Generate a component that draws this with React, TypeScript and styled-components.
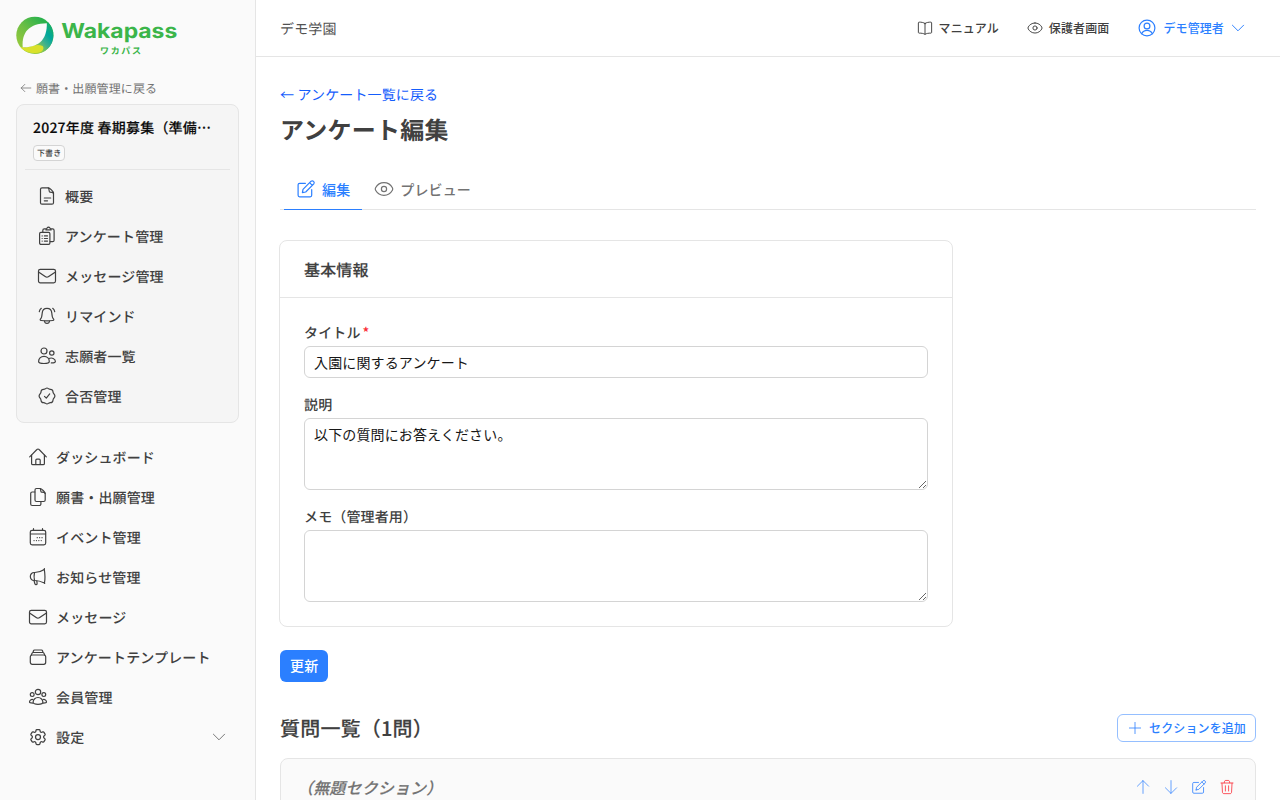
import React from "react";
import styled, { createGlobalStyle, css } from "styled-components";
import { HiOutlineCog6Tooth } from "react-icons/hi2";

const GlobalStyle = createGlobalStyle`
  *, *::before, *::after { box-sizing: border-box; }
  body {
    margin: 0;
    height: 800px;
    overflow: hidden;
    background: #fff;
    color: #404040;
    font-family: "Noto Sans CJK JP", "Noto Sans", sans-serif;
    font-size: 14px;
    line-height: 20px;
    text-rendering: geometricPrecision;
  }
  h1, h2, h3, p { margin: 0; }
  a, p, h1, h2, h3, span, label, button, input, textarea { letter-spacing: 0.01em; }
  button, input, textarea { font: inherit; color: inherit; margin: 0; }
`;

/* sits between the medium and bold cuts of the face */
const semiboldText = css`
  font-weight: 500;
  -webkit-text-stroke: 0.15px currentColor;
`;

/* ---------- icons, all on a 20 unit grid ---------- */

const Svg = styled.svg<{ $size: number; $weight: number }>`
  flex: none;
  display: block;
  width: ${(p) => p.$size}px;
  height: ${(p) => p.$size}px;
  fill: none;
  stroke: currentColor;
  stroke-width: ${(p) => p.$weight};
  stroke-linecap: round;
  stroke-linejoin: round;
`;

const glyphs = {
  file: (
    <>
      <path d="M11.3 1.8H5a1.5 1.5 0 0 0-1.5 1.5v13.4A1.5 1.5 0 0 0 5 18.200h10a1.500 1.500 0 0 0 1.500-1.500V7c0-1.400-3.800-5.200-5.200-5.200Z" />
      <path d="M11.300 1.900c1.300.8.300 4.200 1.500 4.200s3.600.1 3.600 1.400M7.300 12h6.400M7.300 14.800h3.200" />
    </>
  ),
  clipboard: (
    <>
      <rect x="2.600" y="6.400" width="10.300" height="12" rx="1.300" />
      <path d="M5.800 6.200V4.400a1.500 1.500 0 0 1 1.500-1.500h1.400M14.300 2.900h1.300A1.500 1.500 0 0 1 17.100 4.400v9.800a1.500 1.500 0 0 1-1.500 1.500h-2.400" />
      <path d="M9 3.900c0-1.400.9-1.400 1.200-2 .6-1 2-1 2.600 0 .3.600 1.300.6 1.300 2Z" />
      <path d="M5.100 9.900h.1M7.400 9.900h3.100M5.100 12.500h.1M7.400 12.500h3.100M5.100 15.100h.1M7.400 15.100h3.100" />
    </>
  ),
  mail: (
    <>
      <rect x="1.500" y="3.300" width="17" height="13.500" rx="1.800" />
      <path d="m1.900 6.200 6.300 4.400a3 3 0 0 0 3.500 0l6.400-4.400" />
    </>
  ),
  bell: (
    <>
      <path d="M10 2.400c3 0 4.600 2 4.800 4.700.2 2.700.3 4.500 1.500 5.600.9.900.6 1.700-.4 1.800-4 .5-7.800.5-11.800 0-1-.1-1.300-.9-.4-1.800 1.200-1.100 1.300-2.900 1.500-5.600C5.400 4.400 7 2.400 10 2.400Z" />
      <path d="M7.500 15c.3 3.200 4.700 3.200 5 0M4.300 2.300C3.100 3.200 2.500 4.300 2.300 5.700M15.700 2.300c1.200.9 1.800 2 2 3.400" />
    </>
  ),
  users: (
    <>
      <circle cx="7" cy="5" r="3" />
      <circle cx="14.800" cy="7" r="2.200" />
      <path d="M7 10.400c3.300 0 5.300 2.400 5.300 5.100 0 1.300-2 2-5.300 2s-5.400-.7-5.400-2c0-2.700 2-5.100 5.400-5.100Z" />
      <path d="M12 12.600c2.700-1.500 6.400.1 6.400 3 0 1-1.700 1.400-4.100 1.300" />
    </>
  ),
  verified: (
    <>
      <path d="M10 2c1.100 0 1.500 1 2.500 1.200 1.100.2 2-.1 2.800.8.800.8.500 1.700.9 2.700.4 1.100 1.700 1.800 1.700 3.300s-1.300 2.200-1.700 3.300c-.4 1-.1 1.900-.9 2.700-.8.900-1.700.6-2.800.8-1 .200-1.400 1.200-2.500 1.200s-1.500-1-2.500-1.200c-1.100-.2-2 .1-2.800-.8-.8-.8-.5-1.700-.9-2.700C3.400 12.200 2.100 11.500 2.100 10s1.300-2.200 1.700-3.300c.4-1 .1-1.900.9-2.700.8-.9 1.700-.6 2.800-.8C8.500 3 8.900 2 10 2Z" />
      <path d="m7.500 10.400 1.800 1.800 3.400-4.300" />
    </>
  ),
  home: (
    <>
      <path d="m1.700 9.800 7.200-7.300a1.500 1.500 0 0 1 2.200 0l7.200 7.300" />
      <path d="M3.600 8.200v8.200a1.300 1.300 0 0 0 1.300 1.300h10.200a1.300 1.300 0 0 0 1.300-1.300V8.200" />
      <path d="M7.800 17.500v-4.200c0-.7.500-1.100 1.100-1.100h2.200c.6 0 1.100.4 1.100 1.100v4.200" />
    </>
  ),
  documents: (
    <>
      <path d="M12.100 1.500H8.500A1.500 1.500 0 0 0 7 3v10a1.500 1.500 0 0 0 1.500 1.500h7.200a1.500 1.500 0 0 0 1.500-1.500V6.500c0-1.300-3.700-5-5.100-5Z" />
      <path d="M12.100 1.600c1 1 .3 3.400 1.300 3.500 1.100.1 3.700 0 3.700 1.400M6.800 5H4.200a1.500 1.500 0 0 0-1.500 1.500V17a1.500 1.500 0 0 0 1.500 1.500h7.200a1.500 1.500 0 0 0 1.500-1.500v-2.300" />
    </>
  ),
  calendar: (
    <>
      <rect x="2.300" y="3.300" width="15.400" height="14.500" rx="1.800" />
      <path d="M2.500 7h15M5.500 1.700v1.600M14.500 1.700v1.600" />
      <path d="M9.200 10.700h.1M11.600 10.700h.1M14 10.700h.1M6 13.600h.1M8.400 13.600h.1M10.800 13.600h.1M13.200 13.600h.1" />
    </>
  ),
  megaphone: (
    <>
      <path d="M6.300 5.500c3.700.1 7-1 10-3 .8 5 .9 10 .1 13.500-3-1.500-6.400-2.500-10.100-2.500-5.300.2-5.300-8.100 0-8Z" />
      <path d="M6.500 5.500c-.6 2.700-.6 5.300 0 8M6 13.500l.8 3c.6 1.700 2.500 1.300 2.300-.3l-.3-2.300M16.100 2.500l.3-.9M16.500 16l.200.4" />
    </>
  ),
  stack: (
    <>
      <rect x="2.300" y="8" width="15.400" height="9.300" rx="2" />
      <path d="M3.100 8.200 4.200 6c.2-.3.500-.5.900-.5h9.800c.4 0 .7.200.9.500l1.100 2.200M5 5.400l.5-1.600c.2-.6.500-.8 1-.8h7c.500 0 .8.200 1 .8l.5 1.600" />
    </>
  ),
  group: (
    <>
      <circle cx="10" cy="5" r="2.700" />
      <circle cx="4.200" cy="7.600" r="1.900" />
      <circle cx="15.800" cy="7.600" r="1.900" />
      <path d="M10 10.500c3 0 4.900 2.400 4.900 4.800 0 1.300-1.900 2-4.900 2s-4.900-.7-4.900-2c0-2.400 1.900-4.800 4.900-4.800Z" />
      <path d="M4.900 12.500c-2-.4-3.400 1.100-3.400 2.600 0 .7 1.300 1 3.200 1M15.100 12.500c2-.4 3.400 1.100 3.400 2.600 0 .7-1.300 1-3.200 1" />
    </>
  ),
  book: (
    <>
      <path d="M10 4.300C8 3 5.300 2.600 2.700 2.700c-.6 0-1 .3-1 .9v11.900c0 .5.400.9 1 .9 2.800 0 5.300.3 7.300 1.500 2-1.200 4.500-1.500 7.300-1.500.6 0 1-.4 1-.9V3.600c0-.6-.4-.9-1-.9C14.700 2.600 12 3 10 4.300ZM10 4.300v13.400" />
    </>
  ),
  eye: (
    <>
      <path d="M10 3.700c4.100 0 7 2.500 8.400 5 .5.900.5 1.700 0 2.600-1.400 2.500-4.300 5-8.400 5s-7-2.500-8.400-5c-.5-.9-.5-1.700 0-2.600 1.400-2.500 4.300-5 8.400-5Z" />
      <circle cx="10" cy="10" r="2.600" />
    </>
  ),
  user: (
    <>
      <circle cx="10" cy="10" r="7.900" />
      <circle cx="10" cy="8" r="2.900" />
      <path d="M4.600 15.700c1.100-2.200 3-3.300 5.400-3.300s4.300 1.100 5.400 3.300" />
    </>
  ),
  edit: (
    <>
      <path d="M9.400 4.300H3.600A1.500 1.500 0 0 0 2.100 5.800v10.500a1.500 1.500 0 0 0 1.500 1.500h10.600a1.500 1.500 0 0 0 1.500-1.500v-5.600" />
      <path d="m6.400 13.600.6-3.300 8.100-8.100c1.700-1.300 4 .9 2.700 2.700L9.700 13l-3.300.6ZM13.600 3.700l2.700 2.700" />
    </>
  ),
  trash: (
    <>
      <path d="M2.500 5h15M6.500 4.800l.5-2c.2-.7.600-1 1.300-1h3.400c.7 0 1.100.3 1.300 1l.5 2M3.700 5.200l.6 11.200c.1 1.300.8 1.900 2 1.900h7.400c1.200 0 1.900-.6 2-1.900l.6-11.200M8 8.500v6.500M12 8.500v6.500" />
    </>
  ),
  up: <path d="M10 18V2M3 9l7-7 7 7" />,
  down: <path d="M10 2v16M3 11l7 7 7-7" />,
  left: <path d="M18 10H2M8 4l-6 6 6 6" />,
  plus: <path d="M10 3v14M3 10h14" />,
  chevron: <path d="m3 6.500 7 7 7-7" />,
};

type GlyphName = keyof typeof glyphs;

const Icon = ({ name, size = 20, weight = 1.2 }: { name: GlyphName; size?: number; weight?: number }) => (
  <Svg viewBox="0 0 20 20" $size={size} $weight={weight} aria-hidden="true">
    {glyphs[name]}
  </Svg>
);

/* ---------- layout ---------- */

const Shell = styled.div`
  display: grid;
  grid-template-columns: 256px 1fr;
  height: 800px;
  overflow: hidden;
`;

const Sidebar = styled.aside`
  background: #fafafa;
  border-right: 1px solid #e5e5e5;
  padding: 16px 16px 0;
`;

const Logo = styled.svg`
  display: block;
  width: 164px;
  height: 40px;
`;

const BackToList = styled.a`
  display: flex;
  align-items: center;
  gap: 4px;
  margin-top: 24px;
  padding-left: 4px;
  height: 16px;
  font-size: 12px;
  line-height: 16px;
  color: #737373;
`;

const BackLabel = styled.span`
  padding-top: 2px;
`;

const CampaignCard = styled.section`
  margin-top: 8px;
  height: 319px;
  padding: 12px 8px 0;
  border: 1px solid #e5e5e5;
  border-radius: 8px;
  background: #f5f5f5;
`;

const CampaignHead = styled.div`
  height: 53px;
  padding: 1px 8px 0;
  border-bottom: 1px solid #e5e5e5;
`;

const CampaignName = styled.p`
  overflow: hidden;
  white-space: nowrap;
  color: #0a0a0a;
  letter-spacing: 0.015em;
  ${semiboldText}
`;

const Badge = styled.span`
  display: flex;
  align-items: center;
  width: 32px;
  height: 16px;
  margin-top: 7px;
  padding: 1px 0 0 3px;
  border: 1px solid #d4d4d4;
  border-radius: 4px;
  background: #fafafa;
  color: #404040;
  font-size: 8px;
  font-weight: 500;
  line-height: 12px;
  white-space: nowrap;
`;

const Menu = styled.nav<{ $top: number }>`
  display: flex;
  flex-direction: column;
  margin-top: ${(p) => p.$top}px;
`;

const MenuItem = styled.a`
  display: flex;
  align-items: center;
  gap: 8px;
  height: 40px;
  padding: 0 12px;
  font-weight: 500;
`;

const MenuLabel = styled.span`
  flex: 1;
  padding-top: 1px;
  white-space: nowrap;
`;

const Faded = styled.span`
  display: flex;
  color: #737373;
`;

const Page = styled.div`
  display: flex;
  flex-direction: column;
  min-width: 0;
`;

const TopBar = styled.header`
  display: flex;
  align-items: center;
  justify-content: space-between;
  flex: none;
  height: 57px;
  padding: 0 24px;
  border-bottom: 1px solid #e5e5e5;
`;

const SchoolName = styled.span`
  padding-top: 2px;
  color: #525252;
`;

const TopActions = styled.div`
  display: flex;
  gap: 8px;
`;

const TopButton = styled.button<{ $primary?: boolean }>`
  display: flex;
  align-items: center;
  gap: 6px;
  height: 28px;
  padding: 0 10px;
  border: 0;
  background: none;
  font-size: 12px;
  font-weight: 500;
  line-height: 16px;
  color: ${(p) => (p.$primary ? "#2b7fff" : "#404040")};
`;

const Main = styled.main`
  padding: 28px 24px 0;
`;

const BackLink = styled.a`
  display: block;
  color: #155dfc;
`;

const PageTitle = styled.h1`
  margin-top: 8px;
  font-size: 24px;
  font-weight: 700;
  line-height: 32px;
`;

const Tabs = styled.div`
  display: flex;
  margin-top: 25px;
  height: 40px;
  padding: 0 4px;
  border-bottom: 1px solid #e5e5e5;
`;

const Tab = styled.button<{ $active?: boolean }>`
  display: flex;
  align-items: center;
  gap: 6px;
  height: 40px;
  padding: 0 12px 1px;
  border: 0;
  border-bottom: 1px solid ${(p) => (p.$active ? "#2b7fff" : "transparent")};
  background: none;
  font-weight: 500;
  color: ${(p) => (p.$active ? "#2b7fff" : "#737373")};
`;

const FormCard = styled.section`
  width: 674px;
  height: 387px;
  margin: 30px 0 0 -1px;
  border: 1px solid #e5e5e5;
  border-radius: 8px;
`;

const FormHead = styled.div`
  display: flex;
  align-items: center;
  height: 57px;
  padding: 0 24px;
  border-bottom: 1px solid #e5e5e5;
`;

const FormTitle = styled.h2`
  font-size: 16px;
  line-height: 24px;
  ${semiboldText}
`;

const FormBody = styled.div`
  display: flex;
  flex-direction: column;
  gap: 17px;
  padding: 25px 24px 24px;
`;

const Field = styled.div`
  display: flex;
  flex-direction: column;
  gap: 3px;
`;

const FieldLabel = styled.label`
  font-weight: 500;
`;

const Required = styled.span`
  margin-left: 2px;
  color: #fb2c36;
`;

const TextInput = styled.input`
  width: 624px;
  height: 32px;
  padding: 5px 9px;
  border: 1px solid #d4d4d4;
  border-radius: 6px;
  outline: 0;
  background: #fff;
  color: #171717;
`;

const TextArea = styled.textarea`
  display: block;
  width: 624px;
  height: 72px;
  padding: 5px 9px;
  border: 1px solid #d4d4d4;
  border-radius: 6px;
  outline: 0;
  background: #fff;
  color: #171717;
`;

const SubmitButton = styled.button`
  display: block;
  height: 32px;
  margin-top: 23px;
  padding: 0 10px 2px;
  border: 0;
  border-radius: 6px;
  background: #2b7fff;
  color: #fff;
  font-weight: 500;
`;

const SectionBar = styled.div`
  display: flex;
  align-items: center;
  justify-content: space-between;
  height: 28px;
  margin-top: 32px;
`;

const SectionTitle = styled.h2`
  font-size: 20px;
  line-height: 28px;
  ${semiboldText}
`;

const AddButton = styled.button`
  display: flex;
  align-items: center;
  gap: 6px;
  height: 28px;
  padding: 0 9px;
  border: 1px solid #95bfff;
  border-radius: 6px;
  background: #fff;
  color: #2b7fff;
  font-size: 12px;
  font-weight: 500;
  line-height: 16px;
`;

const QuestionSection = styled.section`
  display: flex;
  justify-content: space-between;
  height: 120px;
  margin-top: 16px;
  padding: 16px 14px 0 16px;
  border: 1px solid #e5e5e5;
  border-radius: 8px;
  background: #fafafa;
`;

const UntitledLabel = styled.h3`
  color: #737373;
  font-size: 16px;
  font-style: italic;
  line-height: 24px;
  ${semiboldText}
`;

const RowActions = styled.div`
  display: flex;
  height: 24px;
`;

const IconButton = styled.button<{ $danger?: boolean }>`
  display: flex;
  align-items: center;
  justify-content: center;
  width: 28px;
  height: 24px;
  padding: 0;
  border: 0;
  background: none;
  color: ${(p) => (p.$danger ? "#fb2c36" : "#2b7fff")};
`;

const campaignItems: { icon: GlyphName; label: string }[] = [
  { icon: "file", label: "概要" },
  { icon: "clipboard", label: "アンケート管理" },
  { icon: "mail", label: "メッセージ管理" },
  { icon: "bell", label: "リマインド" },
  { icon: "users", label: "志願者一覧" },
  { icon: "verified", label: "合否管理" },
];

const mainItems: { icon: GlyphName; label: string }[] = [
  { icon: "home", label: "ダッシュボード" },
  { icon: "documents", label: "願書・出願管理" },
  { icon: "calendar", label: "イベント管理" },
  { icon: "megaphone", label: "お知らせ管理" },
  { icon: "mail", label: "メッセージ" },
  { icon: "stack", label: "アンケートテンプレート" },
  { icon: "group", label: "会員管理" },
];

const WakapassLogo = () => (
  <Logo viewBox="16 16 164 40" role="img" aria-label="Wakapass">
    <defs>
      <linearGradient id="ringUpper" x1="0" y1="1" x2="1" y2="0">
        <stop offset="0" stopColor="#a6ce39" />
        <stop offset="0.45" stopColor="#6fbf44" />
        <stop offset="0.8" stopColor="#2bb24c" />
      </linearGradient>
      <linearGradient id="ringLower" x1="1" y1="0" x2="0.3" y2="1">
        <stop offset="0" stopColor="#22b04c" />
        <stop offset="0.4" stopColor="#00a79d" />
        <stop offset="0.65" stopColor="#3bb08f" />
        <stop offset="1" stopColor="#a6ce39" />
      </linearGradient>
    </defs>
    <circle cx="34.900" cy="35.300" r="18.600" fill="url(#ringUpper)" />
    <path d="M46.800 23.200 48.400 22.600A18.600 18.600 0 0 1 34.900 53.900L37 44Z" fill="url(#ringLower)" />
    <path d="M22.600 47.300c4 .3 7-.2 10.500-1.500 2.500-1 6.500-1.200 9.500.2 1.500 1.500.8 4-1.100 5.600a18.600 18.600 0 0 1-21-4.300Z" fill="#d9e12b" />
    <path d="M22.700 47.300C21.500 33 28.500 23.500 46.800 23.300 47.200 38 40 47.800 22.700 47.300Z" fill="#fafafa" />
    <text x="61.300" y="37.800" fontFamily="Inter, sans-serif" fontSize="20.500" fontWeight="700" fill="#3bb54a" textLength="116" lengthAdjust="spacingAndGlyphs">
      Wakapass
    </text>
    <text x="100" y="53.500" fontFamily="Noto Sans CJK JP, sans-serif" fontSize="9" fontWeight="700" fill="#3bb54a" textLength="41">
      ワカパス
    </text>
  </Logo>
);

export default function App() {
  return (
    <>
      <GlobalStyle />
      <Shell>
        <Sidebar>
          <WakapassLogo />
          <BackToList>
            <Icon name="left" size={12} weight={1.3} />
            <BackLabel>願書・出願管理に戻る</BackLabel>
          </BackToList>
          <CampaignCard>
            <CampaignHead>
              <CampaignName>2027年度 春期募集（準備…</CampaignName>
              <Badge>下書き</Badge>
            </CampaignHead>
            <Menu $top={6}>
              {campaignItems.map((item) => (
                <MenuItem key={item.label}>
                  <Icon name={item.icon} />
                  <MenuLabel>{item.label}</MenuLabel>
                </MenuItem>
              ))}
            </Menu>
          </CampaignCard>
          <Menu $top={14}>
            {mainItems.map((item) => (
              <MenuItem key={item.label}>
                <Icon name={item.icon} />
                <MenuLabel>{item.label}</MenuLabel>
              </MenuItem>
            ))}
            <MenuItem>
              <HiOutlineCog6Tooth size={20} />
              <MenuLabel>設定</MenuLabel>
              <Faded>
                <Icon name="chevron" size={16} />
              </Faded>
            </MenuItem>
          </Menu>
        </Sidebar>
        <Page>
          <TopBar>
            <SchoolName>デモ学園</SchoolName>
            <TopActions>
              <TopButton>
                <Icon name="book" size={16} />
                マニュアル
              </TopButton>
              <TopButton>
                <Icon name="eye" size={16} />
                保護者画面
              </TopButton>
              <TopButton $primary>
                <Icon name="user" />
                デモ管理者
                <Icon name="chevron" size={16} />
              </TopButton>
            </TopActions>
          </TopBar>
          <Main>
            <BackLink>← アンケート一覧に戻る</BackLink>
            <PageTitle>アンケート編集</PageTitle>
            <Tabs>
              <Tab $active>
                <Icon name="edit" />
                編集
              </Tab>
              <Tab>
                <Icon name="eye" />
                プレビュー
              </Tab>
            </Tabs>
            <FormCard>
              <FormHead>
                <FormTitle>基本情報</FormTitle>
              </FormHead>
              <FormBody>
                <Field>
                  <FieldLabel htmlFor="title">
                    タイトル<Required>*</Required>
                  </FieldLabel>
                  <TextInput id="title" defaultValue="入園に関するアンケート" />
                </Field>
                <Field>
                  <FieldLabel htmlFor="description">説明</FieldLabel>
                  <TextArea id="description" defaultValue="以下の質問にお答えください。" />
                </Field>
                <Field>
                  <FieldLabel htmlFor="memo">メモ（管理者用）</FieldLabel>
                  <TextArea id="memo" />
                </Field>
              </FormBody>
            </FormCard>
            <SubmitButton>更新</SubmitButton>
            <SectionBar>
              <SectionTitle>質問一覧（1問）</SectionTitle>
              <AddButton>
                <Icon name="plus" size={16} weight={1} />
                セクションを追加
              </AddButton>
            </SectionBar>
            <QuestionSection>
              <UntitledLabel>（無題セクション）</UntitledLabel>
              <RowActions>
                <IconButton><Icon name="up" size={16} weight={0.9} /></IconButton>
                <IconButton><Icon name="down" size={16} weight={0.9} /></IconButton>
                <IconButton><Icon name="edit" size={16} weight={1} /></IconButton>
                <IconButton $danger><Icon name="trash" size={16} weight={1} /></IconButton>
              </RowActions>
            </QuestionSection>
          </Main>
        </Page>
      </Shell>
    </>
  );
}
